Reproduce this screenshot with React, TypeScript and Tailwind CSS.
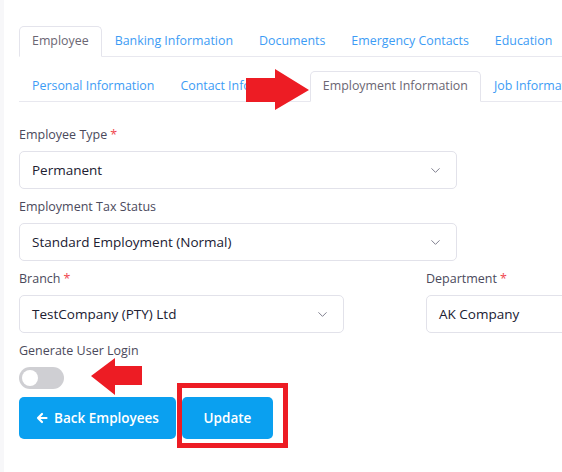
import { ChevronDown } from "lucide-react";

const font = { fontFamily: '"Open Sans", "Liberation Sans", sans-serif' };

const TopTab = ({ text, active }: { text: string; active?: boolean }) => (
  <div
    className={`px-[12px] h-[31px] flex items-center whitespace-nowrap text-[12.4px] -mb-px ${
      active
        ? "border border-[#e4e4ec] border-b-white bg-white rounded-t-[5px] text-[#6b6673]"
        : "border border-transparent text-[#3d9cf5]"
    }`}
  >
    {text}
  </div>
);

const Label = ({ text, req }: { text: string; req?: boolean }) => (
  <div className="text-[12.5px] text-[#4b4a5c] h-[16px] leading-[16px] mb-[8px] whitespace-nowrap">
    {text}
    {req && <span className="text-[#f0464f] ml-[3px]">*</span>}
  </div>
);

const Select = ({ value, w, chevron = true }: { value: string; w: string; chevron?: boolean }) => (
  <div
    className={`${w} h-[38px] border border-[#e2e2ea] rounded-[5px] flex items-center justify-between pl-[12px] pr-[13px] text-[13.5px] text-[#202031] shrink-0`}
  >
    <span className="whitespace-nowrap">{value}</span>
    {chevron && <ChevronDown size={15} strokeWidth={1.6} className="text-[#80808f]" />}
  </div>
);

export default function App() {
  return (
    <div className="w-[562px] h-[472px] overflow-hidden bg-white relative" style={font}>
      <div className="absolute left-0 top-0 bottom-0 w-[4px] bg-[#f7f7f9]" />
      <div className="pl-[19px] pt-[26px]">
        {/* main tabs */}
        <div className="flex border-b border-[#e8e8ef] w-[700px]">
          <TopTab text="Employee" active />
          <TopTab text="Banking Information" />
          <TopTab text="Documents" />
          <TopTab text="Emergency Contacts" />
          <TopTab text="Education" />
        </div>

        {/* sub tabs */}
        <div className="flex border-b border-[#e8e8ef] w-[700px] mt-[14px]">
          <TopTab text="Personal Information" />
          <TopTab text="Contact Information" />
          <TopTab text="Employment Information" active />
          <TopTab text="Job Information" />
        </div>

        <div className="mt-[25px]">
          <Label text="Employee Type" req />
          <Select value="Permanent" w="w-[438px]" />
        </div>
        <div className="mt-[10px]">
          <Label text="Employment Tax Status" />
          <Select value="Standard Employment (Normal)" w="w-[438px]" />
        </div>
        <div className="mt-[10px] flex gap-[82px]">
          <div>
            <Label text="Branch" req />
            <Select value="TestCompany (PTY) Ltd" w="w-[325px]" />
          </div>
          <div>
            <Label text="Department" req />
            <Select value="AK Company" w="w-[325px]" chevron={false} />
          </div>
        </div>
        <div className="mt-[10px]">
          <Label text="Generate User Login" />
          <div className="w-[45px] h-[22px] rounded-full bg-[#cfcfd3] flex items-center pl-[3px]">
            <div className="w-[16px] h-[16px] rounded-full bg-white" />
          </div>
        </div>
        <div className="flex gap-[6px] mt-[8px]">
          <button className="h-[42px] w-[157px] rounded-[5px] bg-[#0aa0f0] text-white text-[13.5px] font-semibold flex items-center justify-center gap-[6px]">
            <svg width="12" height="12" viewBox="0 0 12 12" fill="none" stroke="white" strokeWidth="2.2" strokeLinecap="round" strokeLinejoin="round">
              <path d="M10.5 6H2M6 2L2 6l4 4" />
            </svg>
            Back Employees
          </button>
          <button className="h-[42px] w-[91px] rounded-[5px] bg-[#0aa0f0] text-white text-[13.5px] font-semibold">
            Update
          </button>
        </div>
      </div>

      {/* annotations */}
      <svg className="absolute left-[246px] top-[69px]" width="64" height="42" viewBox="0 0 64 42">
        <polygon points="0,9 29,9 29,0 63,21 29,41 29,33 0,33" fill="#ed1c24" />
      </svg>
      <svg className="absolute left-[91px] top-[358px]" width="51" height="38" viewBox="0 0 51 38">
        <polygon points="51,8 24,8 24,0 0,18 24,37 24,27 51,27" fill="#ed1c24" />
      </svg>
      <div className="absolute left-[177px] top-[383px] w-[111px] h-[65px] border-[5px] border-[#ed1c24]" />
    </div>
  );
}
